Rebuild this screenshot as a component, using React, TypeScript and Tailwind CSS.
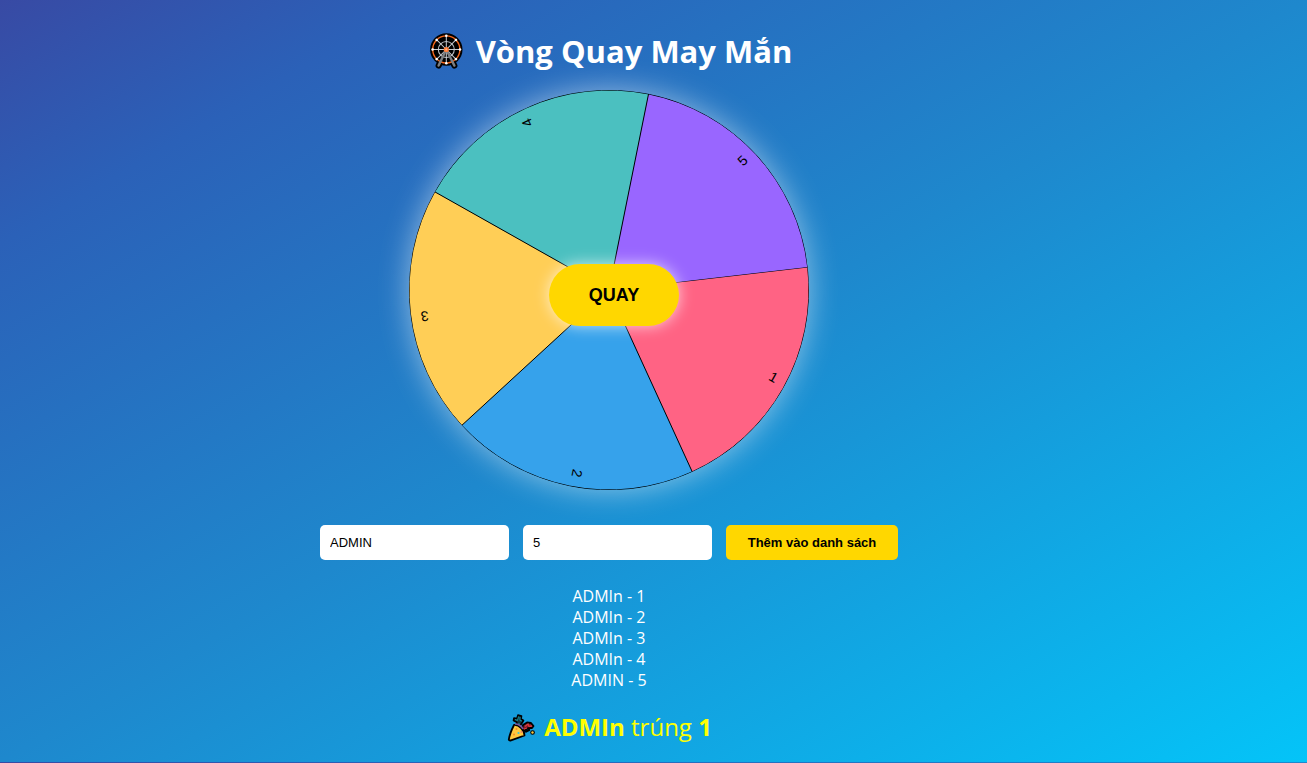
import { useState } from "react";
import type { FormEvent } from "react";

type Entry = { name: string; number: string };

const COLORS = ["#FF6384", "#36A2EB", "#FFCE56", "#4BC0C0", "#9966FF"];
const RADIUS = 200;

const INITIAL: Entry[] = [
  { name: "ADMIn", number: "1" },
  { name: "ADMIn", number: "2" },
  { name: "ADMIn", number: "3" },
  { name: "ADMIn", number: "4" },
  { name: "ADMIN", number: "5" },
];

function point(deg: number) {
  const rad = (deg * Math.PI) / 180;
  return `${RADIUS + RADIUS * Math.cos(rad)} ${RADIUS + RADIUS * Math.sin(rad)}`;
}

function FerrisWheelIcon() {
  const angles = [0, 45, 90, 135, 180, 225, 270, 315];
  return (
    <svg viewBox="0 0 40 40" className="size-10" aria-hidden="true">
      <path d="M20.3 18.5L12.6 34.6M20.3 18.5L28.4 34.6" stroke="#000" strokeWidth="6" strokeLinecap="round" />
      <circle cx="20.3" cy="18.5" r="16.2" fill="#000" />
      <circle cx="20.3" cy="18.5" r="13.6" fill="none" stroke="#f4661b" strokeWidth="1.4" />
      <circle cx="20.3" cy="18.5" r="8" fill="none" stroke="#b8bcc2" strokeWidth="1.1" />
      {angles.map((a) => (
        <g key={a} transform={`rotate(${a} 20.3 18.5)`}>
          <path d="M20.3 18.5V5" stroke="#c9ccd1" strokeWidth="1" />
          <circle cx="20.3" cy="4.8" r="1.3" fill="#fff" />
        </g>
      ))}
      <path d="M20.3 18.5L12.6 34.6M20.3 18.5L28.4 34.6" stroke="#7d7f82" strokeWidth="2.4" strokeLinecap="round" />
      <circle cx="20.3" cy="18.5" r="2.6" fill="#ff7a35" />
      <circle cx="20.3" cy="18.5" r="1" fill="#ffb48a" />
    </svg>
  );
}

function PartyIcon() {
  return (
    <svg viewBox="0 0 30 30" className="size-[30px]" aria-hidden="true">
      <g stroke="#000" strokeLinejoin="round" strokeLinecap="round" fill="none">
        <path d="M12 14L10.500 10L7.500 8.500L8 6L11 6.500L12 3L15.500 4L15 7L17.500 8.500L14 14" fill="#12333c" strokeWidth="1.600" />
        <path d="M16 17L17 13L21 10.500L25 11L27.500 14L26 16L22.500 16L18 19" fill="#7e1f28" strokeWidth="1.800" />
        <path d="M26.500 20.500h.1" strokeWidth="4.500" />
        <path d="M20 19.500l3-1.500" strokeWidth="2.500" />
        <path d="M8 13C5.500 18 3.500 23 2.800 27.500C3 28.500 4 28.700 5 28.300L18.500 23.500C18.500 18 13 12.500 8 13Z" fill="#ffc83d" strokeWidth="1.800" />
      </g>
      <path d="M9 7.500l2.500 1l1-4M14 5v3.500l2 .5M13 11v2" stroke="#15929c" strokeWidth="1" fill="none" />
      <path d="M9 12c3-.3 6.500 2 8 5" stroke="#76569f" strokeWidth="1.600" fill="none" />
      <path d="M19 14.500l3-2.500l1 2.500l3-.5M18 17l3-1" stroke="#e0383b" strokeWidth="1.300" fill="none" />
      <circle cx="26.500" cy="20.500" r="1.200" fill="#ffc83d" />
      <circle cx="12.500" cy="21" r="1.100" fill="#3fc5d0" />
      <circle cx="8" cy="22.500" r="1" fill="#f28a2e" />
      <circle cx="10.500" cy="17" r="1" fill="#f28a2e" />
      <circle cx="15.500" cy="20" r="1" fill="#ef7f6a" />
    </svg>
  );
}

function Wheel({ entries, rotation }: { entries: Entry[]; rotation: number }) {
  const step = 360 / entries.length;
  return (
    <svg
      viewBox="0 0 400 400"
      className="size-full rounded-full shadow-[0_0_30px_rgba(255,255,255,0.5)]"
      role="img"
      aria-label="Vòng quay"
    >
      {entries.map((entry, i) => {
        const start = rotation + i * step;
        return (
          <g key={i}>
            {/* left open so only the leading edge and the rim get a line */}
            <path
              d={`M${RADIUS} ${RADIUS}L${point(start)}A${RADIUS} ${RADIUS} 0 0 1 ${point(start + step)}`}
              fill={COLORS[i % COLORS.length]}
              stroke="#000"
            />
            <g transform={`translate(200 200) rotate(${start + step / 2})`}>
              <text x="190" y="0" textAnchor="end" className="font-['Liberation_Sans',sans-serif] text-[14px]">
                {entry.number}
              </text>
            </g>
          </g>
        );
      })}
    </svg>
  );
}

export default function App() {
  const [entries, setEntries] = useState(INITIAL);
  const [name, setName] = useState("ADMIN");
  const [number, setNumber] = useState("5");
  const [rotation, setRotation] = useState(-6.6);
  const [winner, setWinner] = useState(INITIAL[0]);

  const spin = () => {
    const next = Math.random() * 360;
    const step = 360 / entries.length;
    setRotation(next);
    setWinner(entries[Math.floor(((360 - next) % 360) / step)]);
  };

  const addEntry = (e: FormEvent) => {
    e.preventDefault();
    if (!name || !number) return;
    setEntries([...entries, { name, number }]);
  };

  return (
    <div className="min-h-screen bg-[linear-gradient(to_bottom_right,#384aa4,#2b61b8_16%,#1e88cd_50%,#04c4f8)] bg-[length:100%_calc(100%-1px)] pt-7 pr-[89px] font-['Open_Sans','Noto_Sans',sans-serif] text-white">
      <main className="flex flex-col items-center">
        <h1 className="flex items-center gap-2.5 text-[31px] leading-[46px] font-bold">
          <FerrisWheelIcon />
          Vòng Quay May Mắn
        </h1>

        <div className="relative mt-4 size-100">
          <Wheel entries={entries} rotation={rotation} />
          <button
            type="button"
            onClick={spin}
            className="absolute top-[174px] left-35 h-[62px] w-[130px] rounded-full bg-[#ffd700] font-['Liberation_Sans',sans-serif] text-lg font-bold text-black shadow-[0_0_15px_rgba(255,255,255,0.7)]"
          >
            QUAY
          </button>
        </div>

        <form onSubmit={addEntry} className="mt-[35px] flex flex-wrap justify-center gap-3.5 font-['Liberation_Sans',sans-serif] text-[13px] text-black">
          <input
            aria-label="Tên"
            value={name}
            onChange={(e) => setName(e.target.value)}
            className="h-[35px] w-[189px] rounded-[5px] bg-white px-2.5"
          />
          <input
            aria-label="Số"
            value={number}
            onChange={(e) => setNumber(e.target.value)}
            className="h-[35px] w-[189px] rounded-[5px] bg-white px-2.5"
          />
          <button type="submit" className="h-[35px] w-43 rounded-[5px] bg-[#ffd700] font-bold">
            Thêm vào danh sách
          </button>
        </form>

        <ul className="mt-[26px] text-center text-base leading-[21px]">
          {entries.map((entry, i) => (
            <li key={i}>
              {entry.name} - {entry.number}
            </li>
          ))}
        </ul>

        <div className="mt-[19px] flex items-center gap-2 text-2xl leading-[34px] text-[#ffff00]">
          <PartyIcon />
          <p>
            <strong>{winner.name}</strong> trúng <strong>{winner.number}</strong>
          </p>
        </div>
      </main>
    </div>
  );
}
